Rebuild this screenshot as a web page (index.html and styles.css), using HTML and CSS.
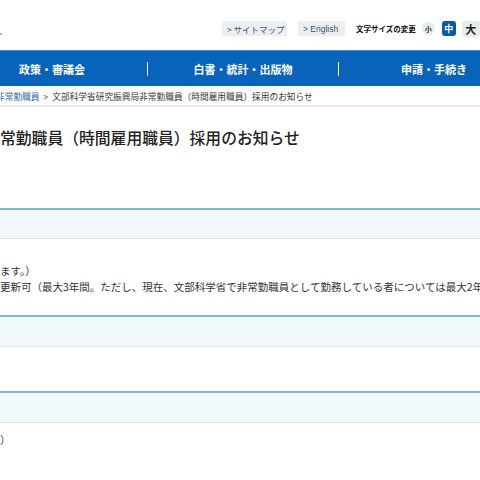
FILE: index.html
```html
<!DOCTYPE html>
<html lang="ja">
<head>
<meta charset="utf-8">
<title>文部科学省研究振興局非常勤職員（時間雇用職員）採用のお知らせ</title>
<link rel="stylesheet" href="styles.css">
</head>
<body>
<header class="top">
  <span class="logo-dot"></span>
  <div class="tools">
    <a class="tool-btn sitemap">&gt; サイトマップ</a>
    <a class="tool-btn english">&gt; English</a>
    <span class="size-label">文字サイズの変更</span>
    <span class="size size-s">小</span>
    <span class="size size-m">中</span>
    <span class="size size-l">大</span>
  </div>
</header>
<nav class="gnav">
  <a class="gnav-item">政策・審議会</a>
  <a class="gnav-item">白書・統計・出版物</a>
  <a class="gnav-item">申請・手続き</a>
</nav>
<div class="crumbs">
  <a class="crumb-link">非常勤職員</a><span class="crumb-sep">&gt;</span><span class="crumb-cur">文部科学省研究振興局非常勤職員（時間雇用職員）採用のお知らせ</span>
</div>
<h1 class="title">常勤職員（時間雇用職員）採用のお知らせ</h1>
<section class="block block-1">
  <div class="band"></div>
  <p class="line">ます。）</p>
  <p class="line">更新可（最大3年間。ただし、現在、文部科学省で非常勤職員として勤務している者については最大2年間）</p>
</section>
<section class="block block-2">
  <div class="band"></div>
</section>
<section class="block block-3">
  <div class="band"></div>
  <p class="line">）</p>
</section>
</body>
</html>
```
FILE: styles.css
```css
html, body {
  margin: 0;
  padding: 0;
  background: #fff;
  overflow: hidden;
  width: 480px;
  height: 480px;
  font-family: "Noto Sans CJK JP", "Noto Sans", sans-serif;
  color: #333;
}

a { text-decoration: none; }

.top {
  height: 50px;
  display: flex;
  align-items: flex-start;
}

.logo-dot {
  width: 2px;
  height: 2px;
  margin-top: 33px;
  background: #bbb;
  flex: none;
}

.tools {
  display: flex;
  align-items: center;
  margin-left: 220px;
  margin-top: 21px;
  height: 15px;
  white-space: nowrap;
}

.tool-btn {
  display: flex;
  align-items: center;
  height: 15px;
  background: #eceff1;
  color: #3f5670;
  font-size: 8.5px;
  padding-left: 5px;
  box-sizing: border-box;
}

.sitemap { width: 65px; }
.english { width: 47px; margin-left: 11px; font-family: "Liberation Sans", sans-serif; font-size: 8.5px; }

.size-label {
  margin-left: 11px;
  font-size: 7.5px;
  font-weight: bold;
  color: #111;
}

.size {
  display: flex;
  align-items: center;
  justify-content: center;
  font-weight: bold;
  flex: none;
}

.size-s {
  width: 13px;
  height: 13px;
  border-radius: 50%;
  background: #e3ecee;
  color: #333;
  font-size: 7px;
  margin-left: 6px;
}

.size-m {
  width: 14px;
  height: 15px;
  border-radius: 3px;
  background: #0b57a8;
  color: #fff;
  font-size: 9px;
  margin-left: 7px;
}

.size-l {
  width: 18px;
  height: 16px;
  border-radius: 3px;
  background: #e6ecee;
  color: #222;
  font-size: 11px;
  margin-left: 6px;
}

.gnav {
  height: 36px;
  box-sizing: border-box;
  border-top: 1px solid #3d8ee0;
  background: #0a63bb;
  display: flex;
  align-items: center;
  margin-left: -43px;
}

.gnav-item {
  flex: none;
  width: 190px;
  line-height: 14px;
  text-align: center;
  color: #fff;
  font-size: 11px;
  font-weight: bold;
  white-space: nowrap;
}

.gnav-item + .gnav-item {
  border-left: 1px solid #fff;
}

.crumbs {
  height: 21px;
  box-sizing: border-box;
  border-bottom: 2px solid #e8e8e8;
  display: flex;
  align-items: center;
  font-size: 8.7px;
  white-space: nowrap;
  margin-left: -4px;
  padding-top: 1px;
}

.crumb-link { color: #2a66a8; }
.crumb-sep { margin: 0 4px; color: #555; }
.crumb-cur { color: #333; }

.title {
  margin: 21px 0 0 0;
  font-size: 15.8px;
  line-height: 20px;
  font-weight: 500;
  color: #222;
  white-space: nowrap;
}

.band {
  height: 31px;
  box-sizing: border-box;
  border-top: 2px solid #7fb8cd;
  border-bottom: 1px solid #e2e8ea;
  background: #f1f9fc;
}

.line {
  margin: 0;
  font-size: 10.5px;
  line-height: 16px;
  white-space: nowrap;
  color: #333;
}

.block-1 { margin-top: 60px; }
.block-1 .band { margin-bottom: 24px; }
.block-2 { margin-top: 20px; }
.block-2 .band { height: 32px; }
.block-3 { margin-top: 44px; }
.block-3 .band { height: 32px; margin-bottom: 9px; }
```
